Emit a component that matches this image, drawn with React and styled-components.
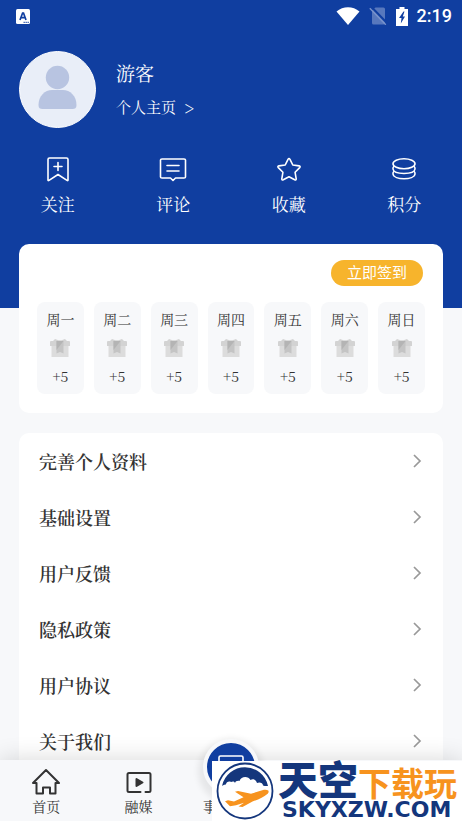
import React from 'react';
import styled, { createGlobalStyle } from 'styled-components';

const blue = '#103ea0';
const navy = '#14367c';
const orange = '#f7931e';
const amber = '#f7b42c';
const mist = '#f7f8fa';
const ink = '#333333';

const serif = `'Noto Serif CJK SC', 'Noto Serif SC', 'Liberation Serif', 'Noto Sans CJK SC', serif`;
const sans = `'Noto Sans CJK SC', sans-serif`;

const GlobalStyle = createGlobalStyle`
  * {
    box-sizing: border-box;
  }
  body {
    margin: 0;
    background: ${mist};
    color: ${ink};
    font-family: ${serif};
  }
  button {
    border: 0;
    padding: 0;
    background: none;
    color: inherit;
    font: inherit;
    cursor: pointer;
  }
  a {
    color: inherit;
    text-decoration: none;
  }
  svg {
    display: block;
    flex: none;
  }
`;

const Screen = styled.div`
  display: flex;
  flex-direction: column;
  height: 100vh;
  overflow: hidden;
`;

const Content = styled.main`
  flex: 1;
  min-height: 0;
  overflow-y: auto;
  scrollbar-width: none;
`;

const Header = styled.header`
  background: ${blue};
  color: white;
  padding-bottom: 92px;
`;

const StatusBar = styled.div`
  display: flex;
  align-items: center;
  justify-content: space-between;
  height: 32px;
  padding: 0 10px 0 16px;
`;

const StatusIcons = styled.div`
  display: flex;
  align-items: center;
  gap: 9px;
`;

const Clock = styled.span`
  font: 500 18px/32px Roboto, sans-serif;
`;

const Profile = styled.section`
  display: flex;
  align-items: center;
  gap: 20px;
  padding: 19px 19px 0;
`;

const ProfileText = styled.div`
  display: flex;
  flex-direction: column;
  gap: 8px;
  padding-bottom: 2px;
`;

const UserName = styled.h1`
  margin: 0;
  font-size: 19px;
  font-weight: 400;
  line-height: 28px;
`;

const HomeLink = styled.a`
  display: flex;
  gap: 8px;
  font-size: 15px;
  line-height: 24px;
`;

const Arrow = styled.span`
  font-size: 18px;
`;

const Shortcuts = styled.nav`
  display: grid;
  grid-template-columns: repeat(4, 1fr);
  padding-top: 28px;
`;

const Shortcut = styled.button`
  display: flex;
  flex-direction: column;
  align-items: center;
  gap: 8px;
  font-size: 17px;
  line-height: 24px;
`;

const Card = styled.section`
  margin: 0 19px 20px;
  border-radius: 10px;
  background: white;
`;

const SignInCard = styled(Card)`
  position: relative;
  margin-top: -64px;
  padding: 16px 18px 19px;
`;

const SignInButton = styled.button`
  display: block;
  width: 92px;
  height: 26px;
  margin: 0 2px 16px auto;
  padding-bottom: 2px;
  border-radius: 13px;
  background: ${amber};
  color: white;
  font: 15px/24px ${sans};
`;

const Week = styled.ul`
  display: grid;
  grid-template-columns: repeat(7, 1fr);
  gap: 10px;
  margin: 0;
  padding: 0;
  list-style: none;
`;

const Day = styled.li`
  display: flex;
  flex-direction: column;
  align-items: center;
  justify-content: space-between;
  height: 92px;
  padding: 7px 0 8px;
  border-radius: 8px;
  background: ${mist};
  font-size: 14px;
  line-height: 20px;
`;

const MenuRow = styled.a`
  display: flex;
  align-items: center;
  justify-content: space-between;
  height: 56px;
  padding: 0 20px;
  font-size: 18px;
  font-weight: 600;
`;

const TabBar = styled.nav`
  position: relative;
  display: grid;
  grid-template-columns: repeat(5, 1fr);
  height: 61px;
  background: ${mist};
  box-shadow: 0 0 24px rgba(0, 0, 0, 0.16);
`;

const Tab = styled.a`
  display: flex;
  flex-direction: column;
  align-items: center;
  justify-content: flex-end;
  padding-bottom: 5px;
  font-size: 14px;
  line-height: 20px;
`;

const TabLabel = styled.span`
  width: ${props => props.$width || 'auto'};
`;

const RoundTab = styled.span`
  position: absolute;
  top: -21px;
  left: 50%;
  display: flex;
  justify-content: center;
  width: 56px;
  height: 56px;
  margin-left: -28px;
  padding-top: 12px;
  border: 4px solid ${mist};
  border-radius: 50%;
  background: ${blue};
  box-shadow: 0 4px 6px 5px rgba(0, 0, 0, 0.07);
`;

const Banner = styled.aside`
  position: absolute;
  right: 0;
  bottom: 0;
  display: flex;
  align-items: center;
  gap: 4px;
  width: 250px;
  height: 60px;
  padding-left: 4px;
  background: white;
`;

const BannerText = styled.div`
  display: flex;
  flex-direction: column;
  gap: 3px;
  white-space: nowrap;
`;

const BannerTitle = styled.div`
  display: flex;
  align-items: flex-end;
  height: 35px;
  color: ${navy};
  font: 900 40px/35px ${sans};
`;

const BannerAccent = styled.span`
  color: ${orange};
  font-size: 33px;
  font-weight: 700;
  line-height: 28px;
`;

const BannerSite = styled.div`
  padding-left: 4px;
  color: ${navy};
  font: 900 22px/22px 'DejaVu Sans', sans-serif;
`;

const KeyboardIcon = () => (
  <svg width="14" height="15" viewBox="0 0 14 15">
    <rect width="14" height="15" rx="1.5" fill="white" />
    <path d="M4 11 6.6 4h.9L10 11M5 8.6h4" fill="none" stroke={blue} strokeWidth="1.7" />
    <path d="M7.5 13.3h5.5" stroke={blue} strokeWidth="1" strokeDasharray="1.4 .6" />
  </svg>
);

const WifiIcon = () => (
  <svg width="24" height="18" viewBox="0 0 24 18">
    <path d="M.5 4.5C7-1.3 17-1.3 23.5 4.5L12 18z" fill="white" />
  </svg>
);

const NoSimIcon = () => (
  <svg width="18" height="18" viewBox="0 0 18 18">
    <path d="M3 3.5 6.5.5h8q1.5 0 1.5 1.5v14q0 1.5-1.5 1.5h-10Q3 17.5 3 16z" fill="#5878bd" />
    <path d="M2.5 0 18 16" stroke={blue} strokeWidth="2" />
    <path d="M.8 1.3 16.8 17.8" stroke="#7a94cc" strokeWidth="1.3" />
  </svg>
);

const BatteryIcon = () => (
  <svg width="12" height="19" viewBox="0 0 12 19">
    <path d="M3.5 0h5v2H12v17H0V2h3.5z" fill="white" />
    <path d="M7.5 4.5 3 11h2.5L4.8 16.5 9 9.5H6.8L8.5 4.5z" fill={blue} />
  </svg>
);

const Avatar = () => (
  <svg width="77" height="77" viewBox="0 0 77 77" role="img" aria-label="游客">
    <circle cx="38.5" cy="38.5" r="38" fill="#e9eef8" stroke="white" />
    <circle cx="38.5" cy="26.5" r="11.7" fill="#b8c4e1" />
    <path d="M19.5 54C19.5 45 26 39 33 39h11c7 0 13.5 6 13.5 15 0 3-1.5 4-4 4h-30c-2.5 0-4-1-4-4z" fill="#b8c4e1" />
  </svg>
);

const LineIcon = styled.svg.attrs({ viewBox: '0 0 28 28', width: 28, height: 28 })`
  fill: none;
  stroke: currentColor;
  stroke-width: ${props => (props.$bold ? 2 : 1.6)};
  stroke-linecap: round;
  stroke-linejoin: round;
`;

const FollowIcon = () => (
  <LineIcon>
    <path d="M5.5 2h17q1.5 0 1.5 1.5v20.5q0 1-1 .3L14 18.5 5 24.3Q4 25 4 24V3.5Q4 2 5.5 2zM14 6.5v8M10 10.5h8" />
  </LineIcon>
);

const CommentIcon = () => (
  <LineIcon>
    <path d="M3 3h22q1.5 0 1.5 1v17q0 1-1.5 1h-8.5L14 24.5 11.5 22H3q-1.5 0-1.5-1V4Q1.5 3 3 3zM8 9.5h12M8 15h12" />
  </LineIcon>
);

const StarIcon = () => (
  <LineIcon>
    <path d="M13 3.3q1-1.6 2 0l2.8 5.7 6.3.9q1.7.4.6 1.7l-4.6 4.7 1.1 6.5q.1 1.6-1.5 1l-5.7-3-5.7 3q-1.6.6-1.5-1L7.9 16.3 3.3 11.6q-1.1-1.3.6-1.7l6.3-.9z" />
  </LineIcon>
);

const PointsIcon = () => (
  <LineIcon>
    <ellipse cx="14" cy="7.8" rx="11" ry="5" />
    <path d="M3.8 10.5Q2.8 11.5 3 13c.8 6 21.2 6 22 0q.2-1.5-.8-2.5" />
    <path d="M3.8 15.5Q2.8 16.5 3 18c.8 6.3 21.2 6.3 22 0q.2-1.5-.8-2.5" />
  </LineIcon>
);

const GiftIcon = () => (
  <svg width="20" height="18" viewBox="0 0 20 18">
    <path d="M1.5 6h17v12h-17z" fill="#dcdcdc" />
    <path d="M0 3q0-1 1-1h2L5 0l3.5 1.2h3L15 0l2 2h2q1 0 1 1v4H0z" fill="#d3d3d3" />
    <path d="M6.5 2h7v12.5L10 13l-3.5 1.5z" fill="#c4c4c4" />
    <path d="M6.5 2h7l-7 9z" fill="#b4b4b4" />
  </svg>
);

const ChevronIcon = () => (
  <svg width="12" height="14" viewBox="0 0 12 14">
    <path d="M3 1 9 7 3 13" fill="none" stroke="#999" strokeWidth="1.7" />
  </svg>
);

const HouseIcon = () => (
  <LineIcon $bold>
    <path d="M1 15 14 2l13 13h-3.5v10.5h-5.500v-6h-7v6H4.500V15z" />
  </LineIcon>
);

const MediaIcon = () => (
  <LineIcon $bold>
    <path d="M15.5 24H4q-1.5 0-1.5-1.5v-16Q2.5 5 4 5h20q1.5 0 1.5 1.5v16q0 1.5-1.5 1.5h-3.5" />
    <path d="M11.5 11v7l6-3.5z" fill="currentColor" />
  </LineIcon>
);

const ScreenIcon = () => (
  <svg width="26" height="22" viewBox="0 0 26 22">
    <rect x="1" y="1" width="24" height="17" rx="1.5" fill="none" stroke="white" strokeWidth="1.6" />
  </svg>
);

const PlaneLogo = () => (
  <svg width="58" height="58" viewBox="0 0 58 58">
    <circle cx="29" cy="29" r="27.5" fill="white" stroke={navy} strokeWidth="1.8" />
    <path d="M6 24A23.5 23.5 0 0 1 52 24c-2 .3-3.500 0-5-.5 0-2.500-3.500-4-6-2.500-1-3.500-4-4.500-6.500-3-2-4-9.500-4-11 1-2.500-.5-4 .5-4.500 2-1-2-2.500-1.500-4-1-2-1-5 0-5 2.500-1.500 0-2.500.5-4 1.500z" fill={navy} />
    <path d="M52.3 28.5C50 27 46.5 28 43 29.2L35 31.7 22 29l-3 .8 8.500 5.400L18 39.500l-6-1.300-3 1 5 5 6-1 8-2.500-5.500 3.800 4 .5 10-5.500C43 37.500 48 35 51 32.300c1.500-1.300 2-2.500 1.300-3.800z" fill={orange} />
  </svg>
);

const shortcuts = [
  { label: '关注', Icon: FollowIcon },
  { label: '评论', Icon: CommentIcon },
  { label: '收藏', Icon: StarIcon },
  { label: '积分', Icon: PointsIcon },
];

const days = ['周一', '周二', '周三', '周四', '周五', '周六', '周日'];

const menu = ['完善个人资料', '基础设置', '用户反馈', '隐私政策', '用户协议', '关于我们'];

const App = () => (
  <>
    <GlobalStyle />
    <Screen>
      <Content>
        <Header>
          <StatusBar>
            <KeyboardIcon />
            <StatusIcons>
              <WifiIcon />
              <NoSimIcon />
              <BatteryIcon />
              <Clock>2:19</Clock>
            </StatusIcons>
          </StatusBar>
          <Profile>
            <Avatar />
            <ProfileText>
              <UserName>游客</UserName>
              <HomeLink href="#home">
                个人主页 <Arrow>&gt;</Arrow>
              </HomeLink>
            </ProfileText>
          </Profile>
          <Shortcuts>
            {shortcuts.map(({ label, Icon }) => (
              <Shortcut key={label} type="button">
                <Icon />
                {label}
              </Shortcut>
            ))}
          </Shortcuts>
        </Header>
        <SignInCard>
          <SignInButton type="button">立即签到</SignInButton>
          <Week>
            {days.map(day => (
              <Day key={day}>
                <span>{day}</span>
                <GiftIcon />
                <span>+5</span>
              </Day>
            ))}
          </Week>
        </SignInCard>
        <Card>
          {menu.map(item => (
            <MenuRow key={item} href="#menu">
              {item}
              <ChevronIcon />
            </MenuRow>
          ))}
        </Card>
      </Content>
      <TabBar>
        <Tab href="#index">
          <HouseIcon />
          <TabLabel>首页</TabLabel>
        </Tab>
        <Tab href="#media">
          <MediaIcon />
          <TabLabel>融媒</TabLabel>
        </Tab>
        <Tab href="#affairs">
          <RoundTab>
            <ScreenIcon />
          </RoundTab>
          <TabLabel $width="56px">事</TabLabel>
        </Tab>
        <Banner>
          <PlaneLogo />
          <BannerText>
            <BannerTitle>
              天空<BannerAccent>下载玩</BannerAccent>
            </BannerTitle>
            <BannerSite>SKYXZW.COM</BannerSite>
          </BannerText>
        </Banner>
      </TabBar>
    </Screen>
  </>
);

export default App;
